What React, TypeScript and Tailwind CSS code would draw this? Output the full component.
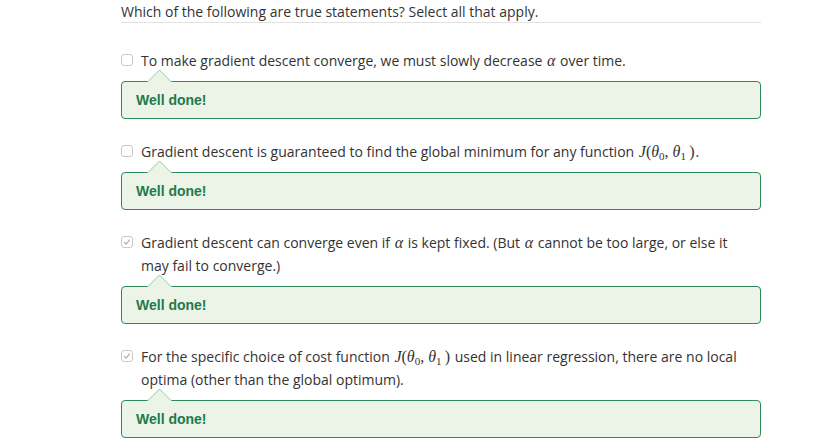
import React from 'react';

type Item = {
  checked: boolean;
  body: React.ReactNode;
};

const Alpha = () => (
  <span className="font-['Liberation_Serif',serif] italic text-[16px] leading-none px-[1px]">α</span>
);

const JTheta = () => (
  <span className="font-['Liberation_Serif',serif] text-[16px] leading-none px-[1px]">
    <span className="italic">J</span>(<span className="italic">θ</span>
    <span className="relative top-[3px] text-[11px] leading-none">0</span>,&nbsp;
    <span className="italic">θ</span>
    <span className="relative top-[3px] text-[11px] leading-none">1</span>&thinsp;)
  </span>
);

const items: Item[] = [
  {
    checked: false,
    body: (
      <>
        To make gradient descent converge, we must slowly decrease <Alpha /> over time.
      </>
    ),
  },
  {
    checked: false,
    body: (
      <>
        Gradient descent is guaranteed to find the global minimum for any function <JTheta />.
      </>
    ),
  },
  {
    checked: true,
    body: (
      <>
        Gradient descent can converge even if <Alpha /> is kept fixed. (But <Alpha /> cannot be too
        large, or else it may fail to converge.)
      </>
    ),
  },
  {
    checked: true,
    body: (
      <>
        For the specific choice of cost function <JTheta /> used in linear regression, there are no
        local optima (other than the global optimum).
      </>
    ),
  },
];

const Checkbox = ({ checked }: { checked: boolean }) => (
  <span className="mt-[5px] flex h-[12px] w-[12px] shrink-0 items-center justify-center rounded-[3px] border border-[#c8c8c8] bg-white">
    {checked && (
      <svg width="8" height="8" viewBox="0 0 8 8" fill="none">
        <path d="M1.2 4.2 L3.1 6.1 L6.8 1.6" stroke="#a9a9a9" strokeWidth="1.1" />
      </svg>
    )}
  </span>
);

const Feedback = () => (
  <div className="relative mt-[9px] flex h-[38px] items-center rounded-[4px] border border-[#2d8a5b] bg-[#ebf4e7] pl-[14px]">
    {/* arrow pointing up at the option */}
    <svg
      className="absolute left-[25px] top-[-13px]"
      width="25"
      height="14"
      viewBox="0 0 25 14"
    >
      <path d="M0.5 13 L12.5 1 L24.5 13 Z" fill="#ebf4e7" stroke="none" />
      <path d="M0.5 13 L12.5 1 L24.5 13" fill="none" stroke="#86cfa3" strokeWidth="1" />
      <rect x="1.5" y="12" width="22" height="2" fill="#ebf4e7" />
    </svg>
    <span className="font-['Liberation_Sans',Arial,sans-serif] text-[14px] font-bold text-[#1f7a4b]">
      Well done!
    </span>
  </div>
);

export default function App() {
  return (
    <div className="h-[448px] w-[830px] overflow-hidden bg-white font-['Open_Sans',sans-serif] text-[#333333]">
      <div className="ml-[121px] w-[640px]">
        <div className="border-b border-[#e2e2e2] pt-[2px] pb-[1px] text-[14px] leading-[19px]">
          Which of the following are true statements? Select all that apply.
        </div>
        <div className="mt-[26px] flex flex-col gap-[21px]">
          {items.map((item, i) => (
            <div key={i}>
              <div className="flex gap-[8px] text-[14px] leading-[23px]">
                <Checkbox checked={item.checked} />
                <div className="w-[612px]">{item.body}</div>
              </div>
              <Feedback />
            </div>
          ))}
        </div>
      </div>
    </div>
  );
}
